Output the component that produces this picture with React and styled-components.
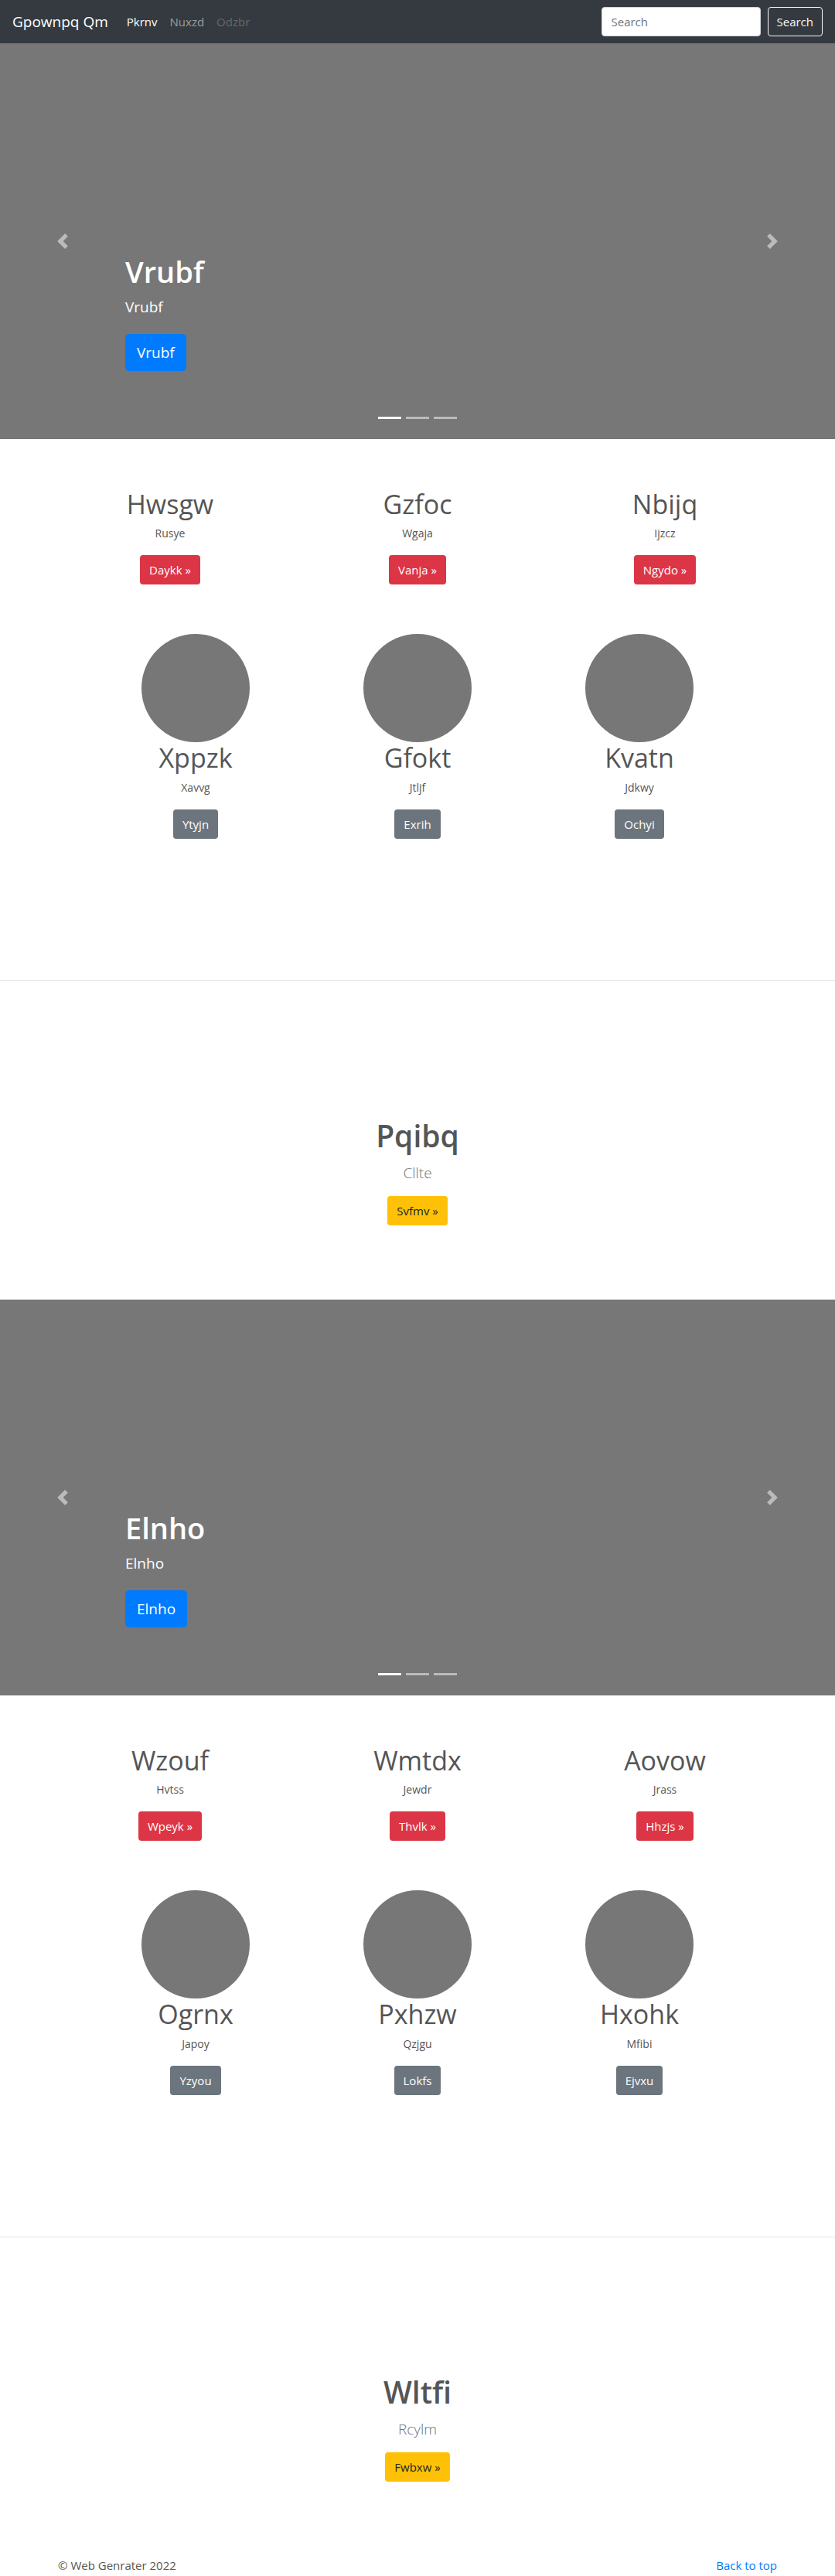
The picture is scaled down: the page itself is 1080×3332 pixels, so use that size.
import React from 'react';
import styled, { createGlobalStyle } from 'styled-components';

const blocks = [
  {
    slide: 'Vrubf',
    features: [
      { title: 'Hwsgw', text: 'Rusye', btn: 'Daykk' },
      { title: 'Gzfoc', text: 'Wgaja', btn: 'Vanja' },
      { title: 'Nbijq', text: 'Ijzcz', btn: 'Ngydo' },
    ],
    people: [
      { name: 'Xppzk', text: 'Xavvg', btn: 'Ytyjn' },
      { name: 'Gfokt', text: 'Jtljf', btn: 'Exrih' },
      { name: 'Kvatn', text: 'Jdkwy', btn: 'Ochyi' },
    ],
    hero: { title: 'Pqibq', text: 'Cllte', btn: 'Svfmv' },
  },
  {
    slide: 'Elnho',
    features: [
      { title: 'Wzouf', text: 'Hvtss', btn: 'Wpeyk' },
      { title: 'Wmtdx', text: 'Jewdr', btn: 'Thvlk' },
      { title: 'Aovow', text: 'Jrass', btn: 'Hhzjs' },
    ],
    people: [
      { name: 'Ogrnx', text: 'Japoy', btn: 'Yzyou' },
      { name: 'Pxhzw', text: 'Qzjgu', btn: 'Lokfs' },
      { name: 'Hxohk', text: 'Mfibi', btn: 'Ejvxu' },
    ],
    hero: { title: 'Wltfi', text: 'Rcylm', btn: 'Fwbxw' },
  },
];

export default function App () {
  return (
    <>
      <GlobalStyle />
      <Navbar>
        <Brand href="#">Gpownpq Qm</Brand>
        <NavLinks>
          <NavLink $state="active" href="#">Pkrnv</NavLink>
          <NavLink href="#">Nuxzd</NavLink>
          <NavLink $state="disabled" href="#">Odzbr</NavLink>
        </NavLinks>
        <SearchForm onSubmit={(e) => e.preventDefault()}>
          <SearchInput type="text" placeholder="Search" />
          <SearchButton type="submit">Search</SearchButton>
        </SearchForm>
      </Navbar>

      {blocks.map((block, i) => (
        <Block key={i}>
          <Carousel>
            <Control $side="left" aria-label="Previous">
              <Chevron dir="left" />
            </Control>
            <Caption>
              <CaptionTitle>{block.slide}</CaptionTitle>
              <CaptionText>{block.slide}</CaptionText>
              <BigButton href="#">{block.slide}</BigButton>
            </Caption>
            <Control $side="right" aria-label="Next">
              <Chevron dir="right" />
            </Control>
            <Indicators>
              <Indicator $active />
              <Indicator />
              <Indicator />
            </Indicators>
          </Carousel>

          <Features>
            {block.features.map((f) => (
              <Col key={f.title}>
                <FeatureTitle>{f.title}</FeatureTitle>
                <SmallText>{f.text}</SmallText>
                <Button $variant="danger" href="#">{f.btn} &raquo;</Button>
              </Col>
            ))}
          </Features>

          <People>
            {block.people.map((p) => (
              <Col key={p.name}>
                <Avatar />
                <PersonName>{p.name}</PersonName>
                <SmallText>{p.text}</SmallText>
                <Button $variant="secondary" href="#">{p.btn}</Button>
              </Col>
            ))}
          </People>

          <Divider />

          <Hero>
            <HeroTitle>{block.hero.title}</HeroTitle>
            <Lead>{block.hero.text}</Lead>
            <Button $variant="warning" href="#">{block.hero.btn} &raquo;</Button>
          </Hero>
        </Block>
      ))}

      <Footer>
        <FooterText>&copy; Web Genrater 2022</FooterText>
        <TopLink href="#">Back to top</TopLink>
      </Footer>
    </>
  );
}

function Chevron ({ dir }) {
  const d = dir === 'left'
    ? 'M5.25 0l-4 4 4 4 1.5-1.5L4.25 4l2.5-2.5L5.25 0z'
    : 'M2.75 0l-1.5 1.5L3.75 4l-2.5 2.5L2.75 8l4-4-4-4z';
  return (
    <svg width="20" height="20" viewBox="0 0 8 8" fill="#fff">
      <path d={d} />
    </svg>
  );
}

const GlobalStyle = createGlobalStyle`
  * { box-sizing: border-box; }
  body {
    margin: 0;
    font-family: "Open Sans", "Noto Sans", sans-serif;
    font-size: 16px;
    line-height: 1.5;
    color: #212529;
    background: #fff;
  }
  a { text-decoration: none; }
`;

const Navbar = styled.nav`
  height: 56px;
  display: flex;
  align-items: center;
  padding: 0 16px;
  background-color: #343a40;
`;

const Brand = styled.a`
  font-size: 19px;
  color: #fff;
  margin-right: 16px;
  line-height: 30px;
`;

const NavLinks = styled.div`
  display: flex;
  flex: 1;
`;

const NavLink = styled.a`
  padding: 8px;
  font-size: 15px;
  color: ${(p) => p.$state === 'active' ? '#fff' : p.$state === 'disabled' ? 'rgba(255,255,255,.25)' : 'rgba(255,255,255,.5)'};
`;

const SearchForm = styled.form`
  display: flex;
  align-items: center;
  gap: 9px;
`;

const SearchInput = styled.input`
  width: 206px;
  height: 38px;
  padding: 6px 12px;
  font-family: inherit;
  font-size: 15px;
  color: #495057;
  border: 1px solid #ced4da;
  border-radius: 4px;
  &::placeholder { color: #6c757d; }
`;

const SearchButton = styled.button`
  height: 38px;
  padding: 0 11px;
  font-family: inherit;
  font-size: 15px;
  color: #f8f9fa;
  background: transparent;
  border: 1px solid #f8f9fa;
  border-radius: 4px;
`;

const Block = styled.section`
  padding-bottom: 96px;
`;

const Carousel = styled.div`
  position: relative;
  height: 512px;
  background-color: #777;
  display: flex;
  align-items: flex-end;
  padding: 0 162px 88px;
`;

const Control = styled.button`
  position: absolute;
  top: 0;
  bottom: 0;
  ${(p) => p.$side}: 0;
  width: 15%;
  display: flex;
  align-items: center;
  justify-content: center;
  background: none;
  border: 0;
  opacity: 0.5;
`;

const Caption = styled.div`
  display: flex;
  flex-direction: column;
  align-items: flex-start;
  color: #fff;
`;

const CaptionTitle = styled.h1`
  margin: 0 0 7px;
  font-size: 38px;
  font-weight: 600;
  line-height: 48px;
`;

const CaptionText = styled.p`
  margin: 0 0 20px;
  font-size: 19px;
  line-height: 30px;
`;

const BigButton = styled.a`
  display: inline-block;
  height: 48px;
  padding: 0 15px;
  font-size: 19px;
  line-height: 48px;
  color: #fff;
  background-color: #007bff;
  border-radius: 5px;
`;

const Indicators = styled.div`
  position: absolute;
  left: 0;
  right: 0;
  bottom: 26px;
  display: flex;
  justify-content: center;
  gap: 6px;
`;

const Indicator = styled.span`
  width: 30px;
  height: 3px;
  background-color: ${(p) => p.$active ? '#fff' : 'rgba(255,255,255,.5)'};
`;

const Features = styled.div`
  width: 960px;
  margin: 0 auto;
  padding-top: 63px;
  display: grid;
  grid-template-columns: repeat(3, 1fr);
`;

const People = styled.div`
  width: 861px;
  margin: 0 auto;
  padding-top: 64px;
  display: grid;
  grid-template-columns: repeat(3, 1fr);
`;

const Col = styled.div`
  display: flex;
  flex-direction: column;
  align-items: center;
  text-align: center;
`;

const FeatureTitle = styled.h2`
  margin: 0 0 6px;
  font-size: 34px;
  font-weight: 500;
  line-height: 42px;
  color: #555;
`;

const PersonName = styled.h2`
  margin: -1px 0 7px;
  font-size: 34px;
  font-weight: 400;
  line-height: 42px;
  color: #555;
`;

const SmallText = styled.p`
  margin: 0 0 17px;
  font-size: 14px;
  line-height: 22px;
  color: #555;
`;

const Avatar = styled.div`
  width: 140px;
  height: 140px;
  border-radius: 50%;
  background-color: #777;
`;

const colors = {
  danger: ['#dc3545', '#fff'],
  secondary: ['#6c757d', '#fff'],
  warning: ['#ffc107', '#212529'],
};

const Button = styled.a`
  display: inline-block;
  height: 38px;
  padding: 0 12px;
  font-size: 15px;
  line-height: 38px;
  background-color: ${(p) => colors[p.$variant][0]};
  color: ${(p) => colors[p.$variant][1]};
  border-radius: 4px;
`;

const Divider = styled.hr`
  margin: 183px 0 0;
  border: 0;
  border-top: 1px solid rgba(0,0,0,.1);
`;

const Hero = styled.div`
  padding-top: 176px;
  display: flex;
  flex-direction: column;
  align-items: center;
  text-align: center;
`;

const HeroTitle = styled.h1`
  margin: 0 0 9px;
  font-size: 39px;
  font-weight: 600;
  line-height: 48px;
  color: #555;
`;

const Lead = styled.p`
  margin: 0 0 15px;
  font-size: 19px;
  font-weight: 300;
  line-height: 30px;
  color: #6c757d;
`;

const Footer = styled.footer`
  width: 930px;
  margin: 0 auto;
  height: 24px;
  display: flex;
  justify-content: space-between;
  align-items: center;
`;

const FooterText = styled.p`
  margin: 0;
  font-size: 15px;
  color: #555;
`;

const TopLink = styled.a`
  font-size: 15px;
  color: #007bff;
`;
